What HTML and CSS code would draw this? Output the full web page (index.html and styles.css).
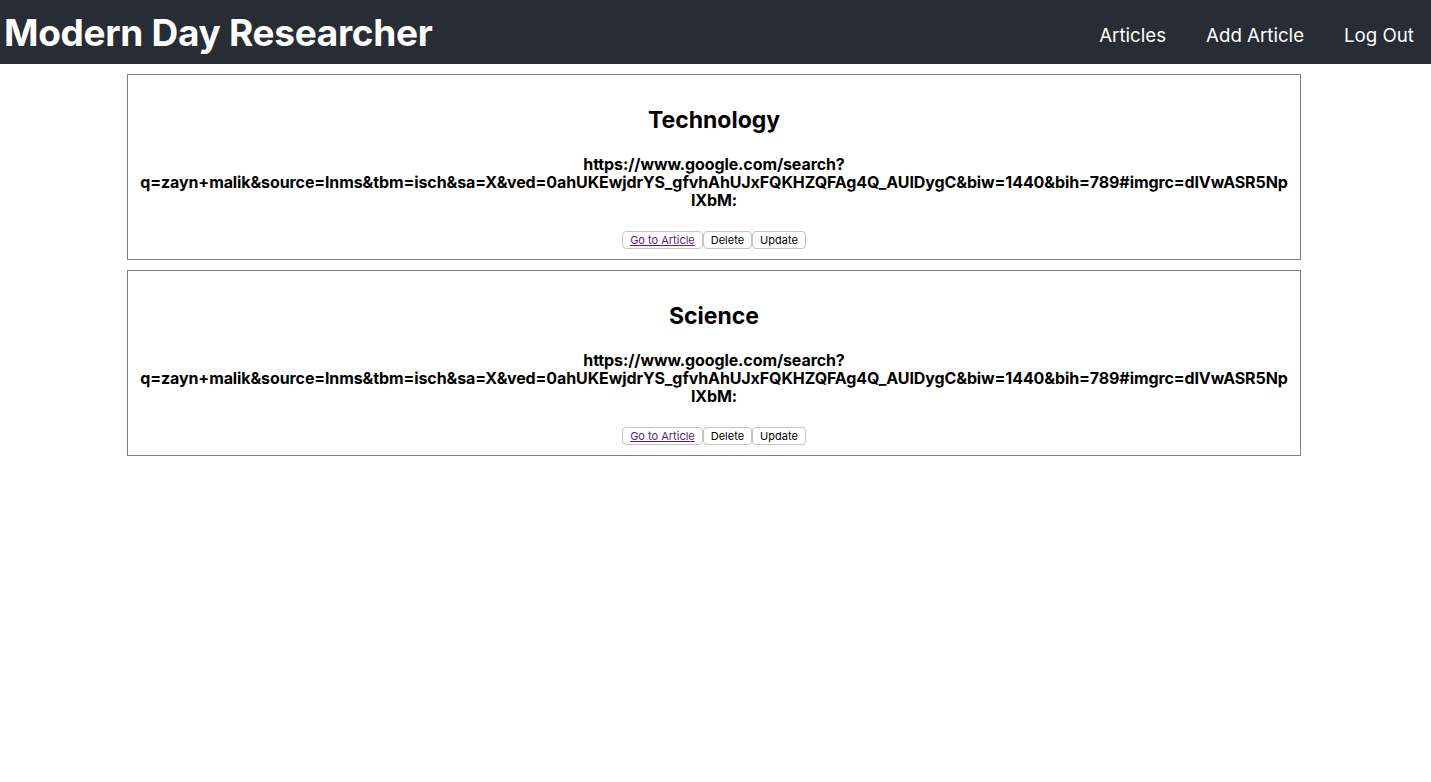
FILE: index.html
```html
<!DOCTYPE html>
<html>
<head>
<meta charset="utf-8">
<title>Modern Day Researcher</title>
<link rel="stylesheet" href="styles.css">
</head>
<body>
<header class="topbar">
  <h1 class="brand">Modern Day Researcher</h1>
  <nav class="nav">
    <a class="nav-link" href="#">Articles</a>
    <a class="nav-link" href="#">Add Article</a>
    <a class="nav-link" href="#">Log Out</a>
  </nav>
</header>
<main class="list">
  <section class="card">
    <h2 class="card-title">Technology</h2>
    <h4 class="card-url">https://www.google.com/search?<wbr>q=zayn+malik&amp;source=lnms&amp;tbm=isch&amp;sa=X&amp;ved=0ahUKEwjdrYS_gfvhAhUJxFQKHZQFAg4Q_AUIDygC&amp;biw=1440&amp;bih=789#imgrc=dIVwASR5Np<wbr>IXbM:</h4>
    <div class="actions">
      <button class="btn"><a class="btn-link" href="#">Go to Article</a></button><button class="btn">Delete</button><button class="btn">Update</button>
    </div>
  </section>
  <section class="card">
    <h2 class="card-title">Science</h2>
    <h4 class="card-url">https://www.google.com/search?<wbr>q=zayn+malik&amp;source=lnms&amp;tbm=isch&amp;sa=X&amp;ved=0ahUKEwjdrYS_gfvhAhUJxFQKHZQFAg4Q_AUIDygC&amp;biw=1440&amp;bih=789#imgrc=dIVwASR5Np<wbr>IXbM:</h4>
    <div class="actions">
      <button class="btn"><a class="btn-link" href="#">Go to Article</a></button><button class="btn">Delete</button><button class="btn">Update</button>
    </div>
  </section>
</main>
</body>
</html>
```
FILE: styles.css
```css
* { box-sizing: border-box; }
body {
  margin: 0;
  font-family: Inter, "Noto Sans", "Liberation Sans", sans-serif;
  color: #000;
  background: #fff;
}
.topbar {
  height: 64px;
  background: #282c34;
  display: flex;
  align-items: center;
  justify-content: space-between;
  padding: 0 17px 0 4px;
}
.brand {
  margin: 0;
  color: #fff;
  font-size: 37px;
  font-weight: 700;
  letter-spacing: -0.3px;
  line-height: 1;
}
.nav {
  display: flex;
  gap: 40px;
  position: relative;
  top: 3px;
}
.nav-link {
  color: #fff;
  text-decoration: none;
  font-size: 18.7px;
  font-weight: 400;
}
.list {
  display: flex;
  flex-direction: column;
  align-items: flex-start;
  gap: 10px;
  padding: 10px 0 0 127px;
}
.card {
  width: 1174px;
  border: 1px solid #808080;
  padding: 10px 10px 10px;
  text-align: center;
}
.card-title {
  margin: 21px 0 20px;
  font-size: 23px;
  font-weight: 700;
  line-height: 29px;
}
.card-url {
  margin: 20px 0 22px;
  font-size: 16px;
  font-weight: 700;
  line-height: 18px;
  overflow-wrap: anywhere;
  letter-spacing: -0.1px;
}
.actions {
  display: flex;
  justify-content: center;
}
.btn {
  font-family: Inter, "Noto Sans", "Liberation Sans", sans-serif;
  font-size: 11px;
  height: 18px;
  line-height: 14px;
  padding: 1px 7px;
  background: #fff;
  border: 1px solid #c4c4c4;
  border-radius: 4px;
  color: #000;
}
.btn-link {
  color: #551a8b;
  text-decoration: underline;
}
```
